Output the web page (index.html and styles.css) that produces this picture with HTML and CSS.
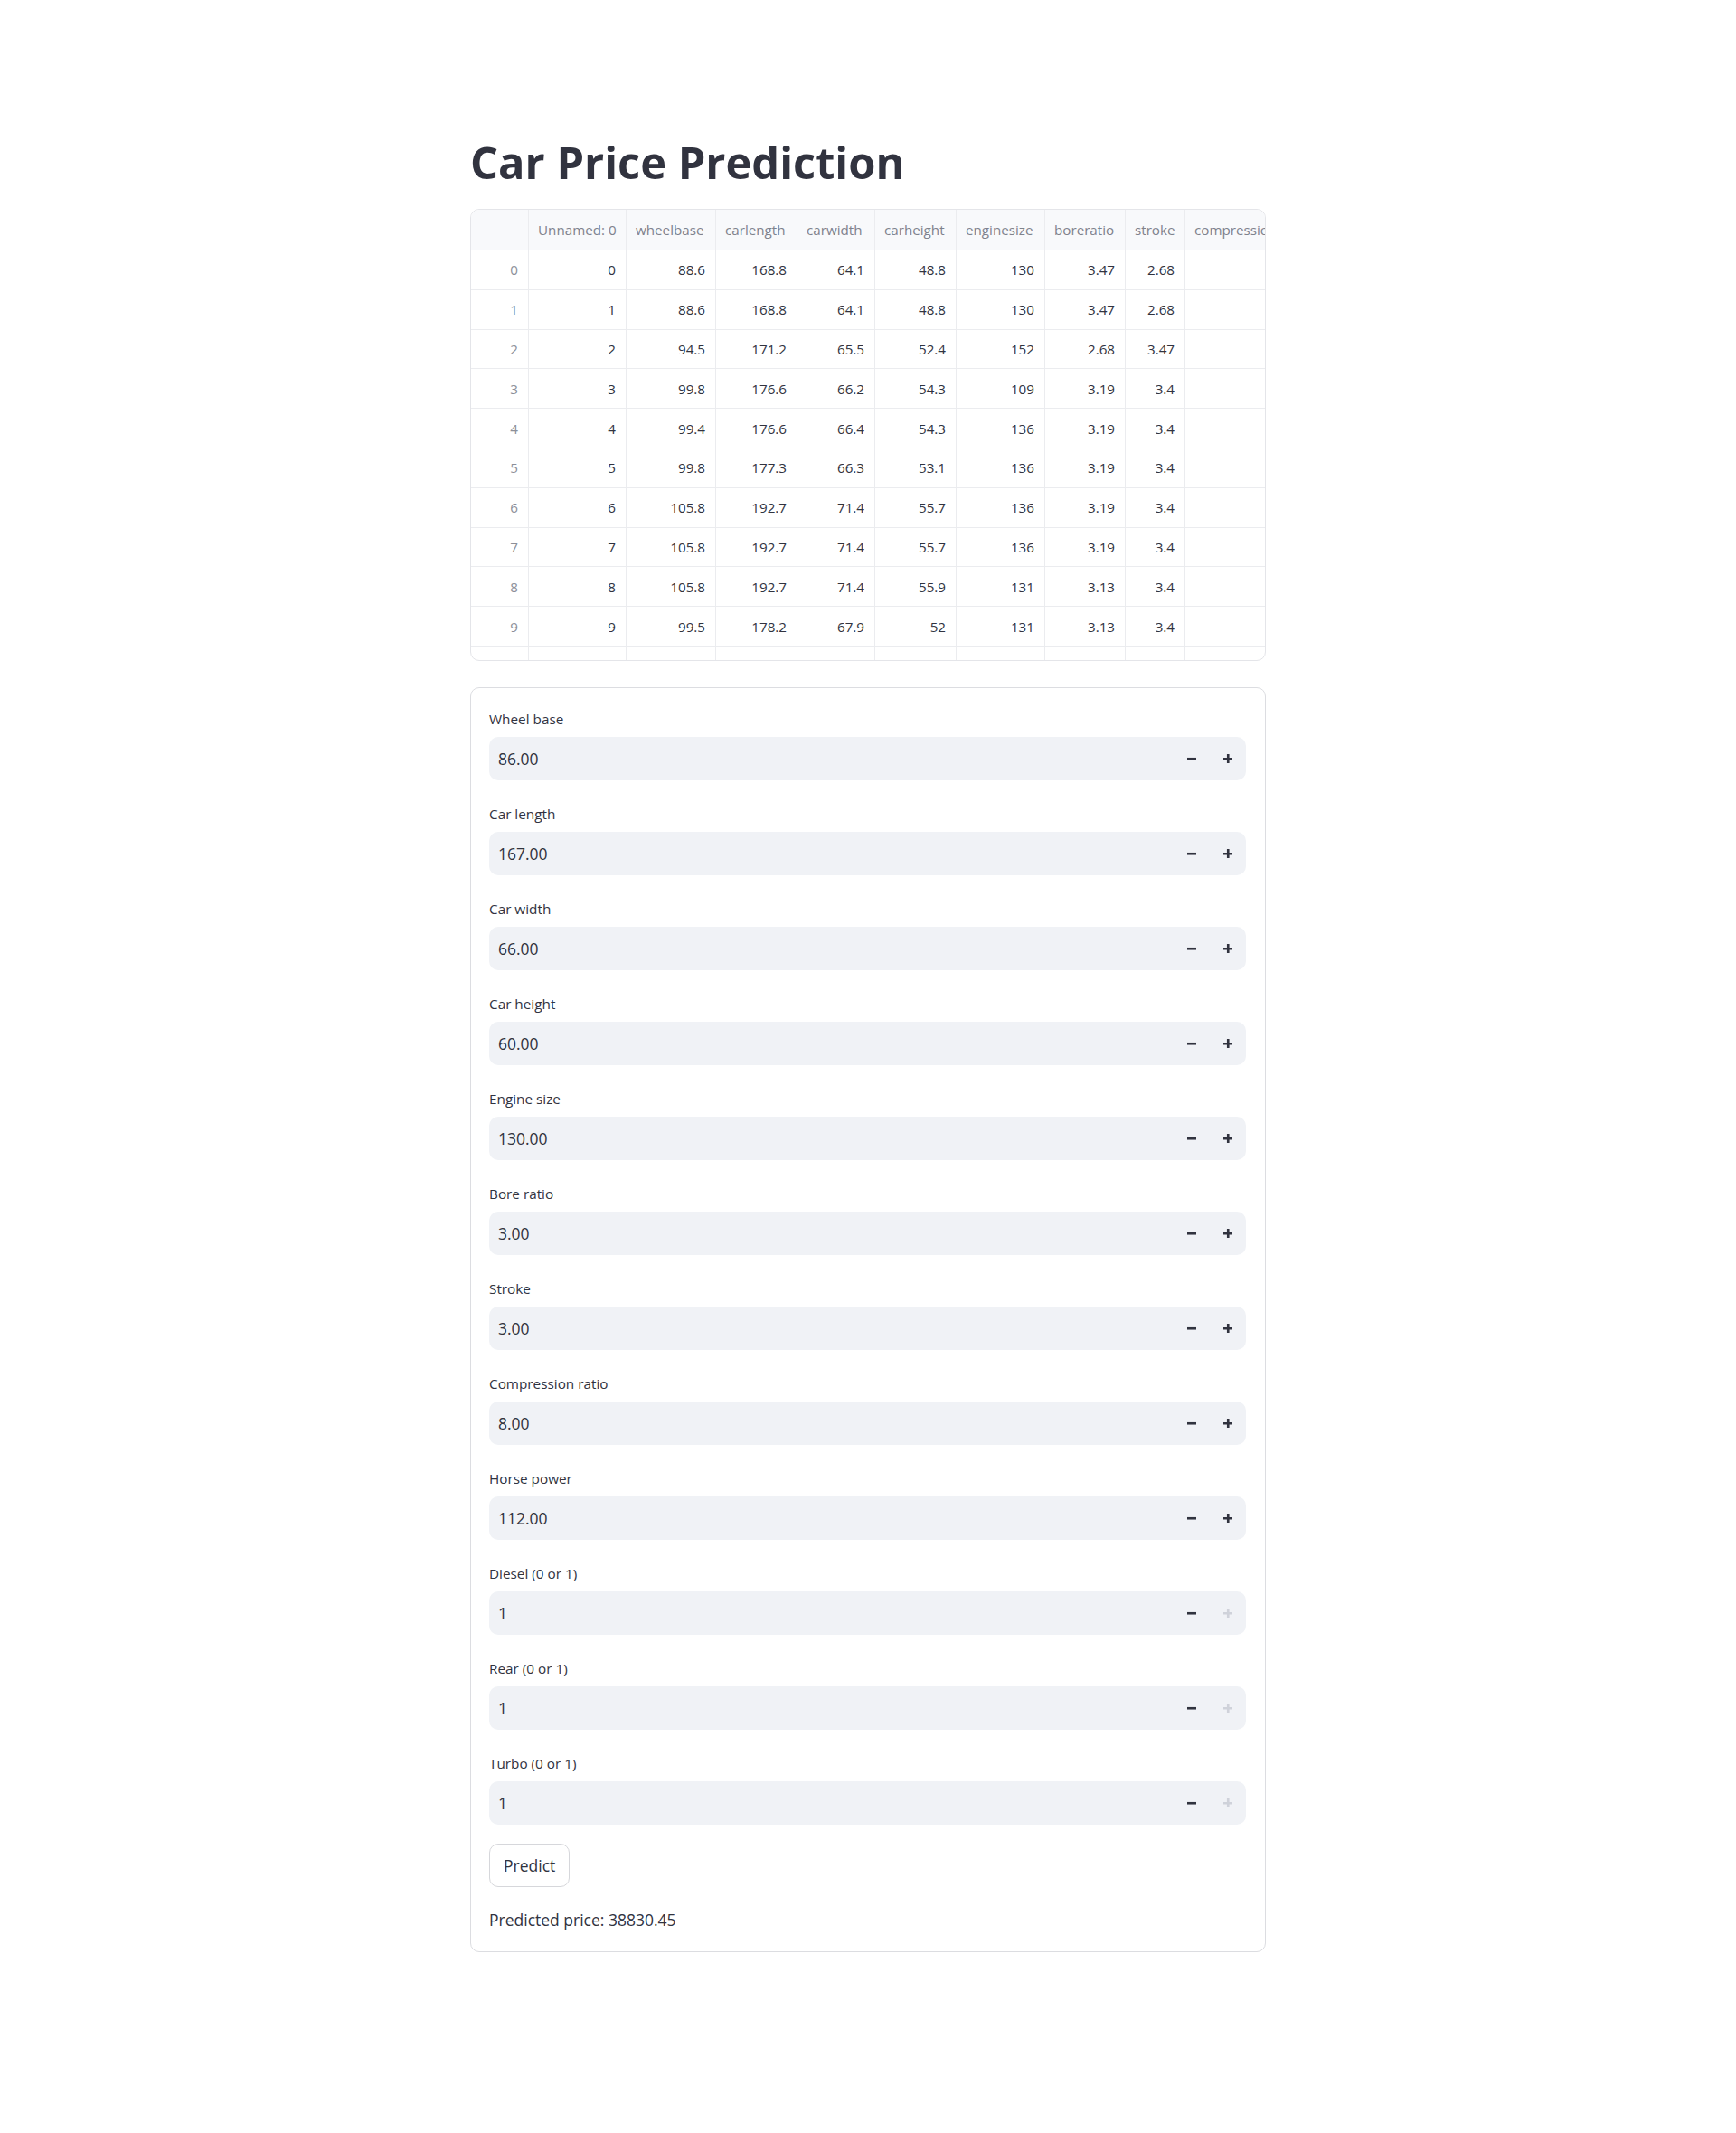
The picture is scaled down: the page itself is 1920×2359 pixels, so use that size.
FILE: index.html
```html
<!DOCTYPE html>
<html lang="en">
<head>
<meta charset="utf-8">
<title>Car Price Prediction</title>
<link rel="stylesheet" href="styles.css">
</head>
<body>
<main class="page">
  <h1 class="title">Car Price Prediction</h1>

  <div class="df">
    <div class="df-row df-head">
      <div class="idx"></div><div>Unnamed: 0</div><div>wheelbase</div><div>carlength</div><div>carwidth</div><div>carheight</div><div>enginesize</div><div>boreratio</div><div>stroke</div><div>compressionratio</div>
    </div>
    <div class="df-row"><div class="idx">0</div><div>0</div><div>88.6</div><div>168.8</div><div>64.1</div><div>48.8</div><div>130</div><div>3.47</div><div>2.68</div><div></div></div>
    <div class="df-row"><div class="idx">1</div><div>1</div><div>88.6</div><div>168.8</div><div>64.1</div><div>48.8</div><div>130</div><div>3.47</div><div>2.68</div><div></div></div>
    <div class="df-row"><div class="idx">2</div><div>2</div><div>94.5</div><div>171.2</div><div>65.5</div><div>52.4</div><div>152</div><div>2.68</div><div>3.47</div><div></div></div>
    <div class="df-row"><div class="idx">3</div><div>3</div><div>99.8</div><div>176.6</div><div>66.2</div><div>54.3</div><div>109</div><div>3.19</div><div>3.4</div><div></div></div>
    <div class="df-row"><div class="idx">4</div><div>4</div><div>99.4</div><div>176.6</div><div>66.4</div><div>54.3</div><div>136</div><div>3.19</div><div>3.4</div><div></div></div>
    <div class="df-row"><div class="idx">5</div><div>5</div><div>99.8</div><div>177.3</div><div>66.3</div><div>53.1</div><div>136</div><div>3.19</div><div>3.4</div><div></div></div>
    <div class="df-row"><div class="idx">6</div><div>6</div><div>105.8</div><div>192.7</div><div>71.4</div><div>55.7</div><div>136</div><div>3.19</div><div>3.4</div><div></div></div>
    <div class="df-row"><div class="idx">7</div><div>7</div><div>105.8</div><div>192.7</div><div>71.4</div><div>55.7</div><div>136</div><div>3.19</div><div>3.4</div><div></div></div>
    <div class="df-row"><div class="idx">8</div><div>8</div><div>105.8</div><div>192.7</div><div>71.4</div><div>55.9</div><div>131</div><div>3.13</div><div>3.4</div><div></div></div>
    <div class="df-row"><div class="idx">9</div><div>9</div><div>99.5</div><div>178.2</div><div>67.9</div><div>52</div><div>131</div><div>3.13</div><div>3.4</div><div></div></div>
    <div class="df-row"><div class="idx"></div><div></div><div></div><div></div><div></div><div></div><div></div><div></div><div></div><div></div></div>
  </div>

  <form class="form">
    <div class="field">
      <label class="lbl">Wheel base</label>
      <div class="num"><span class="val">86.00</span>
        <button type="button" class="step"><svg viewBox="0 0 8 8"><path d="M0 3v2h8V3H0z"/></svg></button>
        <button type="button" class="step"><svg viewBox="0 0 8 8"><path d="M3 0v3H0v2h3v3h2V5h3V3H5V0H3z"/></svg></button>
      </div>
    </div>
    <div class="field">
      <label class="lbl">Car length</label>
      <div class="num"><span class="val">167.00</span>
        <button type="button" class="step"><svg viewBox="0 0 8 8"><path d="M0 3v2h8V3H0z"/></svg></button>
        <button type="button" class="step"><svg viewBox="0 0 8 8"><path d="M3 0v3H0v2h3v3h2V5h3V3H5V0H3z"/></svg></button>
      </div>
    </div>
    <div class="field">
      <label class="lbl">Car width</label>
      <div class="num"><span class="val">66.00</span>
        <button type="button" class="step"><svg viewBox="0 0 8 8"><path d="M0 3v2h8V3H0z"/></svg></button>
        <button type="button" class="step"><svg viewBox="0 0 8 8"><path d="M3 0v3H0v2h3v3h2V5h3V3H5V0H3z"/></svg></button>
      </div>
    </div>
    <div class="field">
      <label class="lbl">Car height</label>
      <div class="num"><span class="val">60.00</span>
        <button type="button" class="step"><svg viewBox="0 0 8 8"><path d="M0 3v2h8V3H0z"/></svg></button>
        <button type="button" class="step"><svg viewBox="0 0 8 8"><path d="M3 0v3H0v2h3v3h2V5h3V3H5V0H3z"/></svg></button>
      </div>
    </div>
    <div class="field">
      <label class="lbl">Engine size</label>
      <div class="num"><span class="val">130.00</span>
        <button type="button" class="step"><svg viewBox="0 0 8 8"><path d="M0 3v2h8V3H0z"/></svg></button>
        <button type="button" class="step"><svg viewBox="0 0 8 8"><path d="M3 0v3H0v2h3v3h2V5h3V3H5V0H3z"/></svg></button>
      </div>
    </div>
    <div class="field">
      <label class="lbl">Bore ratio</label>
      <div class="num"><span class="val">3.00</span>
        <button type="button" class="step"><svg viewBox="0 0 8 8"><path d="M0 3v2h8V3H0z"/></svg></button>
        <button type="button" class="step"><svg viewBox="0 0 8 8"><path d="M3 0v3H0v2h3v3h2V5h3V3H5V0H3z"/></svg></button>
      </div>
    </div>
    <div class="field">
      <label class="lbl">Stroke</label>
      <div class="num"><span class="val">3.00</span>
        <button type="button" class="step"><svg viewBox="0 0 8 8"><path d="M0 3v2h8V3H0z"/></svg></button>
        <button type="button" class="step"><svg viewBox="0 0 8 8"><path d="M3 0v3H0v2h3v3h2V5h3V3H5V0H3z"/></svg></button>
      </div>
    </div>
    <div class="field">
      <label class="lbl">Compression ratio</label>
      <div class="num"><span class="val">8.00</span>
        <button type="button" class="step"><svg viewBox="0 0 8 8"><path d="M0 3v2h8V3H0z"/></svg></button>
        <button type="button" class="step"><svg viewBox="0 0 8 8"><path d="M3 0v3H0v2h3v3h2V5h3V3H5V0H3z"/></svg></button>
      </div>
    </div>
    <div class="field">
      <label class="lbl">Horse power</label>
      <div class="num"><span class="val">112.00</span>
        <button type="button" class="step"><svg viewBox="0 0 8 8"><path d="M0 3v2h8V3H0z"/></svg></button>
        <button type="button" class="step"><svg viewBox="0 0 8 8"><path d="M3 0v3H0v2h3v3h2V5h3V3H5V0H3z"/></svg></button>
      </div>
    </div>
    <div class="field">
      <label class="lbl">Diesel (0 or 1)</label>
      <div class="num"><span class="val">1</span>
        <button type="button" class="step"><svg viewBox="0 0 8 8"><path d="M0 3v2h8V3H0z"/></svg></button>
        <button type="button" class="step off"><svg viewBox="0 0 8 8"><path d="M3 0v3H0v2h3v3h2V5h3V3H5V0H3z"/></svg></button>
      </div>
    </div>
    <div class="field">
      <label class="lbl">Rear (0 or 1)</label>
      <div class="num"><span class="val">1</span>
        <button type="button" class="step"><svg viewBox="0 0 8 8"><path d="M0 3v2h8V3H0z"/></svg></button>
        <button type="button" class="step off"><svg viewBox="0 0 8 8"><path d="M3 0v3H0v2h3v3h2V5h3V3H5V0H3z"/></svg></button>
      </div>
    </div>
    <div class="field">
      <label class="lbl">Turbo (0 or 1)</label>
      <div class="num"><span class="val">1</span>
        <button type="button" class="step"><svg viewBox="0 0 8 8"><path d="M0 3v2h8V3H0z"/></svg></button>
        <button type="button" class="step off"><svg viewBox="0 0 8 8"><path d="M3 0v3H0v2h3v3h2V5h3V3H5V0H3z"/></svg></button>
      </div>
    </div>

    <button type="button" class="predict">Predict</button>
    <p class="result">Predicted price: 38830.45</p>
  </form>
</main>
</body>
</html>
```
FILE: styles.css
```css
* {
  box-sizing: border-box;
}

html, body {
  margin: 0;
  background: #ffffff;
}

body {
  font-family: "Open Sans", "Noto Sans", sans-serif;
  color: #31333f;
}

.page {
  width: 880px;
  margin: 0 auto;
  padding-top: 150px;
  padding-bottom: 190px;
}

.title {
  margin: 0 0 23px;
  font-size: 48.8px;
  line-height: 58px;
  font-weight: 700;
  color: #31333f;
}

/* dataframe */
.df {
  height: 500px;
  border: 1px solid #e4e5e9;
  border-radius: 10px;
  overflow: hidden;
  font-size: 15.2px;
  background: #ffffff;
}

.df-row {
  display: grid;
  grid-template-columns: 64px 108px 99px 90px 86px 90px 98px 89px 66px 140px;
  height: 43.8px;
}

.df-row > div {
  display: flex;
  align-items: center;
  justify-content: flex-end;
  padding: 0 11px;
  border-right: 1px solid #ebecef;
  border-bottom: 1px solid #ebecef;
  white-space: nowrap;
  overflow: hidden;
  color: #31333f;
}

.df-head {
  height: 45px;
}

.df-head > div {
  justify-content: flex-start;
  padding: 0 10px;
  background: #f8f9fb;
  color: #7f828d;
}

.df-row > .idx {
  color: #8c8f99;
}

/* form */
.form {
  margin-top: 29px;
  border: 1px solid #dcdde1;
  border-radius: 10px;
  padding: 19px 21px 19px 20px;
  display: flex;
  flex-direction: column;
}

.field {
  display: flex;
  flex-direction: column;
}

.field + .field {
  margin-top: 22px;
}

.lbl {
  height: 30px;
  margin-bottom: 5px;
  display: flex;
  align-items: center;
  font-size: 15.3px;
  line-height: 24px;
  color: #31333f;
}

.num {
  height: 48px;
  background: #f0f2f6;
  border-radius: 10px;
  display: flex;
  align-items: center;
}

.val {
  flex: 1;
  padding-left: 10px;
  font-size: 17.5px;
  color: #31333f;
}

.step {
  width: 40px;
  height: 48px;
  padding: 0;
  border: 0;
  background: transparent;
  display: flex;
  align-items: center;
  justify-content: center;
  color: #31333f;
}

.step svg {
  width: 10.5px;
  height: 10.5px;
  fill: currentColor;
}

.step.off {
  color: #cfd2da;
}

.predict {
  align-self: flex-start;
  margin-top: 21px;
  height: 48px;
  padding: 0 15px;
  border: 1px solid #d6d7db;
  border-radius: 10px;
  background: #ffffff;
  font-family: "Open Sans", "Noto Sans", sans-serif;
  font-size: 17.5px;
  color: #31333f;
}

.result {
  margin: 20px 0 0;
  font-size: 17.5px;
  line-height: 32px;
  color: #31333f;
}
```
